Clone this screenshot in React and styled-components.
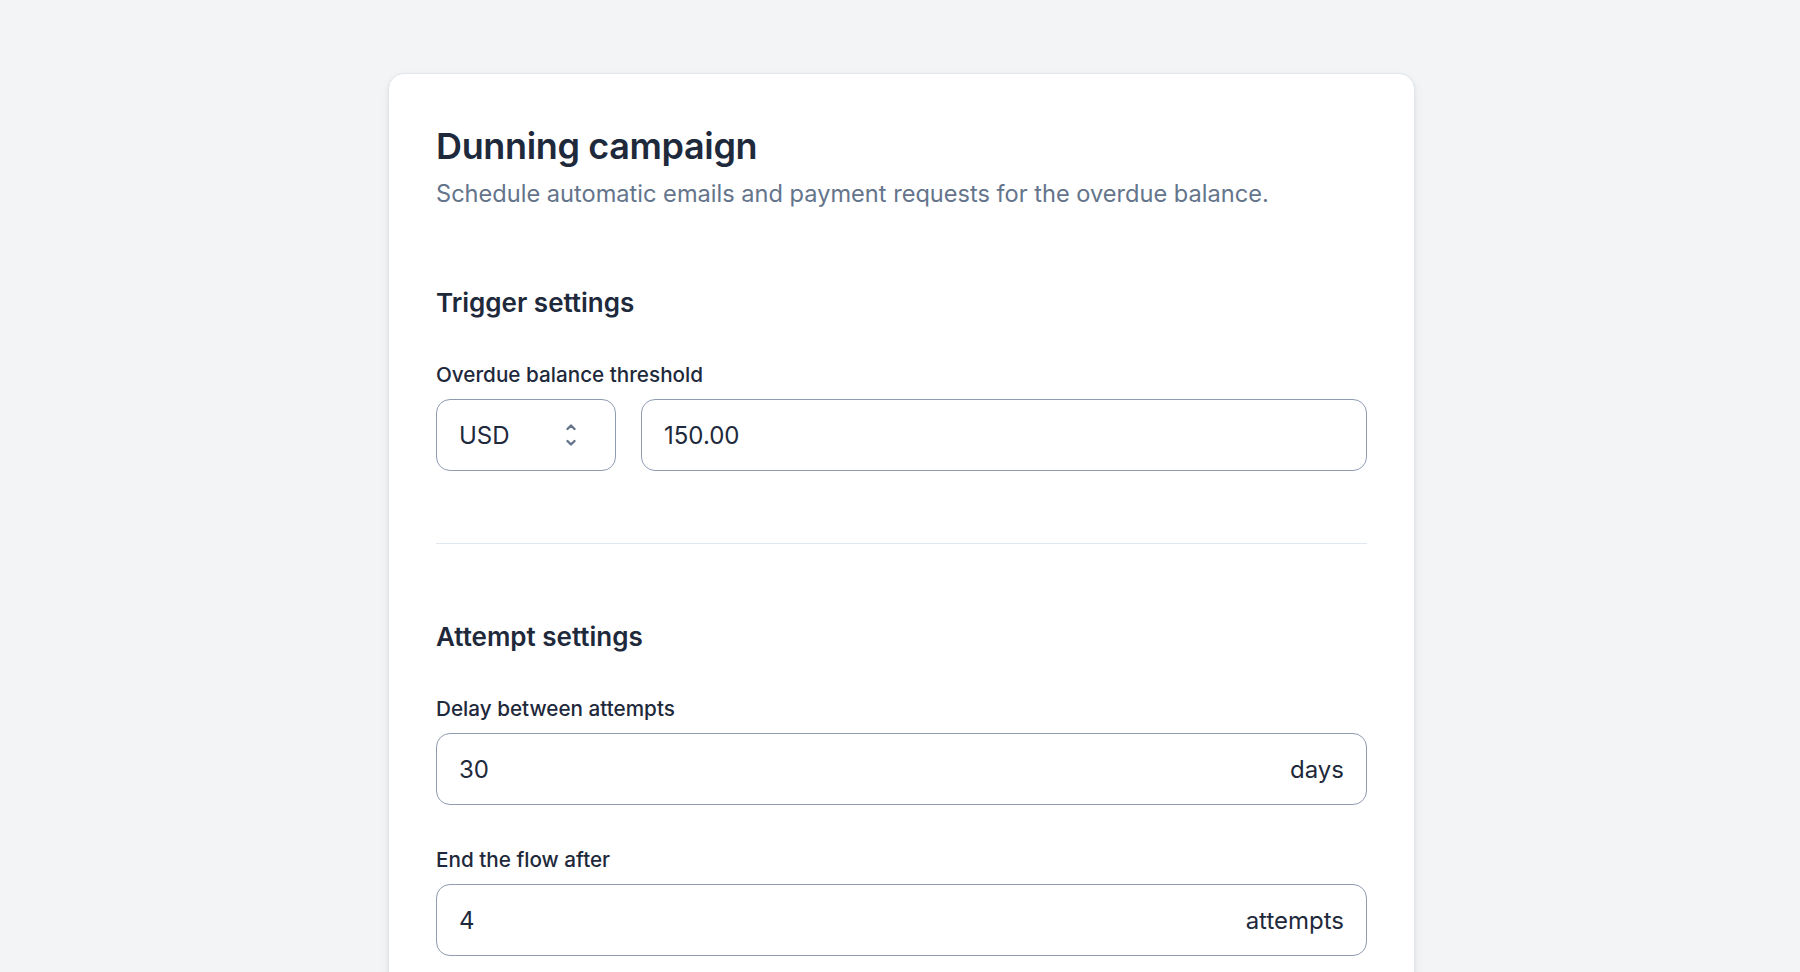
import React from "react";
import styled, { createGlobalStyle } from "styled-components";

const GlobalStyle = createGlobalStyle`
  * { box-sizing: border-box; }
  html, body { margin: 0; padding: 0; background: #f3f4f6; }
  body { font-family: Inter, "Noto Sans", sans-serif; color: #1e293b; -webkit-font-smoothing: antialiased; }
`;

const Page = styled.div`
  min-height: 100vh;
  padding-top: 73px;
  padding-left: 3px;
  display: flex;
  justify-content: center;
  align-items: flex-start;
`;

const Card = styled.section`
  width: 1027px;
  background: #ffffff;
  border: 1px solid #e2e5ea;
  border-radius: 16px;
  box-shadow: 0 1px 3px rgba(15, 23, 42, 0.06), 0 4px 12px rgba(15, 23, 42, 0.05);
  padding: 50px 47px 48px 47px;
`;

const Title = styled.h1`
  margin: 0;
  font-size: 36px;
  line-height: 44px;
  font-weight: 600;
  color: #1e293b;
  letter-spacing: -0.01em;
`;

const Subtitle = styled.p`
  margin: 10px 0 0;
  font-size: 23.6px;
  line-height: 32px;
  color: #64748b;
`;

const Section = styled.div`
  margin-top: ${(p) => p.$top}px;
  display: flex;
  flex-direction: column;
`;

const SectionTitle = styled.h2`
  margin: 0 0 41px;
  font-size: 26px;
  line-height: 34px;
  font-weight: 600;
  color: #1e293b;
`;

const Field = styled.div`
  display: flex;
  flex-direction: column;
  gap: 10px;
  & + & {
    margin-top: 41px;
  }
`;

const Label = styled.label`
  font-size: 20.7px;
  line-height: 28px;
  font-weight: 500;
  color: #1e293b;
`;

const Row = styled.div`
  display: flex;
  gap: 25px;
`;

const Box = styled.div`
  height: 72px;
  border: 1.5px solid #8e9bb0;
  border-radius: 14px;
  display: flex;
  align-items: center;
  padding: 0 ${(p) => (p.$fixed ? 39 : 22)}px 0 22px;
  color: #1e293b;
  background: #fff;
  flex: ${(p) => (p.$fixed ? "0 0 180px" : "1 1 auto")};
  justify-content: space-between;
`;

const Value = styled.span`
  font-size: 24px;
`;

const Suffix = styled.span`
  font-size: 24px;
  color: #1e293b;
`;

const Divider = styled.hr`
  margin: 72px 0 0;
  border: none;
  border-top: 1.5px solid #e2e8f0;
`;

const Helper = styled.p`
  margin: 12px 0 0;
  font-size: 20px;
  line-height: 28px;
  color: #64748b;
`;

const Chevrons = () => (
  <svg width="10" height="24" viewBox="0 0 10 24" fill="none" stroke="#64748b" strokeWidth="2.4" strokeLinecap="round" strokeLinejoin="round">
    <path d="M1.5 6 L5 2.5 L8.5 6" />
    <path d="M1.5 18 L5 21.5 L8.5 18" />
  </svg>
);

export default function App() {
  return (
    <>
      <GlobalStyle />
      <Page>
        <Card>
          <Title>Dunning campaign</Title>
          <Subtitle>Schedule automatic emails and payment requests for the overdue balance.</Subtitle>

          <Section $top={76}>
            <SectionTitle>Trigger settings</SectionTitle>
            <Field>
              <Label>Overdue balance threshold</Label>
              <Row>
                <Box $fixed>
                  <Value>USD</Value>
                  <Chevrons />
                </Box>
                <Box>
                  <Value>150.00</Value>
                </Box>
              </Row>
            </Field>
          </Section>

          <Divider />

          <Section $top={76}>
            <SectionTitle>Attempt settings</SectionTitle>
            <Field>
              <Label>Delay between attempts</Label>
              <Box>
                <Value>30</Value>
                <Suffix>days</Suffix>
              </Box>
            </Field>
            <Field>
              <Label>End the flow after</Label>
              <Box>
                <Value>4</Value>
                <Suffix>attempts</Suffix>
              </Box>
              <Helper>Retry the payment until the invoice is paid or the flow ends.</Helper>
            </Field>
          </Section>
        </Card>
      </Page>
    </>
  );
}
